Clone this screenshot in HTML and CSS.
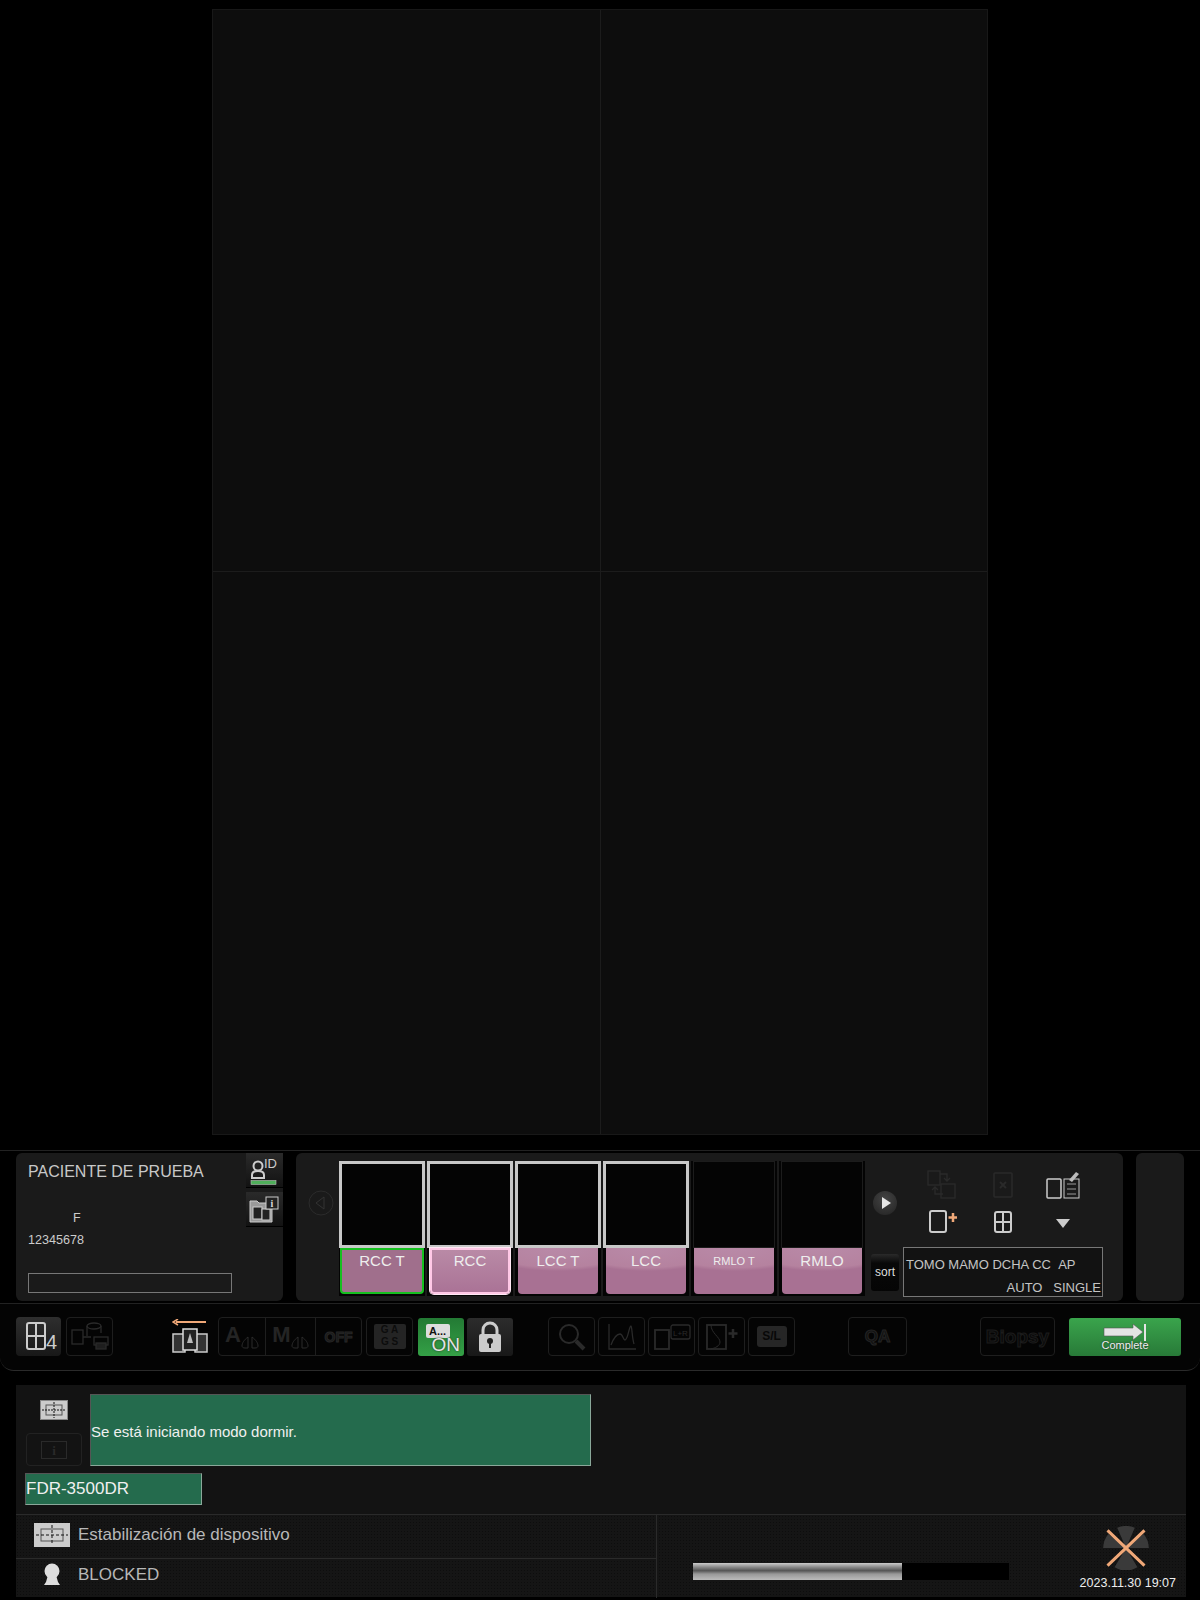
FILE: index.html
```html
<!DOCTYPE html>
<html lang="es">
<head>
    <meta charset="UTF-8">
    <title>Consola</title>
    <link rel="stylesheet" href="styles.css">
</head>
<body>
<div class="viewer">
    <div class="cell"></div>
    <div class="cell"></div>
    <div class="cell"></div>
    <div class="cell"></div>
</div>

<div class="work">
    <div class="patient">
        <div class="patient-info">
            <div class="patient-name">PACIENTE DE PRUEBA</div>
            <div class="patient-sex">F</div>
            <div class="patient-id">12345678</div>
            <div class="patient-note"></div>
        </div>
        <div class="patient-side">
            <div class="side-btn">
                <svg width="37" height="34" viewBox="0 0 37 34">
                    <circle cx="12" cy="13" r="4.500" fill="none" stroke="#ccc" stroke-width="2"/>
                    <path d="M6 25v-3c0-3 3-4 6-4s6 1 6 4v3z" fill="none" stroke="#ccc" stroke-width="2"/>
                    <text x="18" y="15" class="id-text">ID</text>
                    <rect x="5" y="27.500" width="25" height="4" fill="#4fae5a" stroke="#bbb" stroke-width="0.600"/>
                </svg>
            </div>
            <div class="side-btn">
                <svg width="37" height="35" viewBox="0 0 37 35">
                    <path d="M4 9h7l2 2h13v19H4z" fill="#9a9a9a" stroke="#ccc"/>
                    <rect x="7" y="15" width="9" height="12" fill="#222" stroke="#ccc"/>
                    <rect x="16" y="17" width="8" height="11" fill="#222" stroke="#ccc"/>
                    <rect x="20" y="5" width="12" height="12" fill="#222" stroke="#ccc"/>
                    <text x="26" y="15" class="i-text">i</text>
                </svg>
            </div>
        </div>
    </div>

    <div class="thumbs">
        <div class="nav-col">
            <svg class="nav-left" width="26" height="26" viewBox="0 0 26 26">
                <circle cx="13" cy="13" r="12" fill="none" stroke="#2b2b2b"/>
                <path d="M16 7v12l-8-6z" fill="none" stroke="#333"/>
            </svg>
        </div>
        <div class="strip">
            <div class="slot">
                <div class="thumb on"></div>
                <div class="label active">RCC T</div>
            </div>
            <div class="slot">
                <div class="thumb on"></div>
                <div class="label selected">RCC</div>
            </div>
            <div class="slot">
                <div class="thumb on"></div>
                <div class="label">LCC T</div>
            </div>
            <div class="slot">
                <div class="thumb on"></div>
                <div class="label">LCC</div>
            </div>
            <div class="slot">
                <div class="thumb"></div>
                <div class="label small">RMLO T</div>
            </div>
            <div class="slot">
                <div class="thumb"></div>
                <div class="label">RMLO</div>
            </div>
        </div>
        <div class="thumb-tools">
            <div class="next-btn"></div>
            <div class="sort-btn">sort</div>
        </div>
        <div class="tools-right">
            <div class="icon-grid">
                <svg width="32" height="30" viewBox="0 0 32 30" fill="none" stroke="#2a2a2a" stroke-width="1.300">
                    <rect x="1" y="1" width="12" height="14"/>
                    <rect x="14" y="14" width="14" height="14"/>
                    <path d="M13 4h7v6M17 8l3 3 3-3M16 24H8v-6M5 20l3-3 3 3"/>
                </svg>
                <svg width="20" height="26" viewBox="0 0 20 26" fill="none" stroke="#2a2a2a" stroke-width="1.500">
                    <rect x="1" y="1" width="18" height="24" rx="1"/>
                    <path d="M7 10l6 6M13 10l-6 6" stroke-width="2"/>
                </svg>
                <svg width="34" height="28" viewBox="0 0 34 28" fill="none" stroke="#ccc">
                    <rect x="1" y="8" width="14" height="19" rx="1" stroke-width="1.500"/>
                    <rect x="18" y="8" width="15" height="19" stroke-width="1"/>
                    <path d="M21 13h9M21 18h9M21 23h9" stroke="#999"/>
                    <path d="M23 9l7-8 3 2-7 8z" fill="#bbb" stroke="none"/>
                </svg>
                <svg width="28" height="24" viewBox="0 0 28 24" fill="none">
                    <rect x="1" y="1" width="16" height="21" rx="2" stroke="#ccc" stroke-width="2"/>
                    <path d="M24 3v9M19.500 7.500h9" stroke="#f0a878" stroke-width="2.500"/>
                </svg>
                <svg width="18" height="22" viewBox="0 0 18 22" fill="none" stroke="#ccc" stroke-width="2">
                    <rect x="1" y="1" width="16" height="20" rx="2"/>
                    <path d="M9 1v20M1 11h16"/>
                </svg>
                <svg class="drop" width="14" height="9" viewBox="0 0 14 9"><path d="M0 0h14l-7 9z" fill="#ccc"/></svg>
            </div>
            <div class="protocol">
                <div>TOMO MAMO DCHA CC&nbsp;&nbsp;AP</div>
                <div class="protocol-right">AUTO&nbsp;&nbsp;&nbsp;SINGLE</div>
            </div>
        </div>
    </div>

    <div class="spare"></div>
</div>

<div class="toolbar">
    <div class="tool lit">
        <svg width="42" height="34" viewBox="0 0 42 34" fill="none">
            <rect x="9" y="3" width="18" height="26" rx="2" stroke="#ccc" stroke-width="2"/>
            <path d="M18 3v26M9 16h18" stroke="#ccc" stroke-width="2"/>
            <text x="28" y="29" class="four">4</text>
        </svg>
    </div>
    <div class="tool dim wide-gap">
        <svg width="40" height="32" viewBox="0 0 40 32" fill="none" stroke="#2a2a2a" stroke-width="1.300">
            <rect x="2" y="9" width="11" height="14"/>
            <ellipse cx="24" cy="5" rx="7" ry="3"/>
            <path d="M17 5v10M31 5v7M13 16h8"/>
            <rect x="24" y="16" width="14" height="8"/>
            <rect x="26" y="22" width="10" height="6" fill="#1e1e1e"/>
        </svg>
    </div>
    <div class="tray">
        <svg width="36" height="36" viewBox="0 0 36 36" fill="none">
            <path d="M34 3H4" stroke="#f0a878" stroke-width="2"/>
            <path d="M6 0L1 3l5 3" stroke="#f0a878" stroke-width="1.500"/>
            <rect x="1" y="15" width="12" height="18" stroke="#ccc" stroke-width="1.500" fill="#333"/>
            <rect x="23" y="15" width="12" height="18" stroke="#ccc" stroke-width="1.500" fill="#333"/>
            <rect x="11" y="10" width="14" height="21" stroke="#ddd" stroke-width="1.500" fill="#222"/>
            <path d="M18 14l-3 10h6z" fill="#bbb"/>
        </svg>
    </div>
    <div class="tool-group">
        <div class="seg seg-a"><b>A</b><svg width="18" height="13" viewBox="0 0 18 13" fill="none" stroke="#2a2a2a"><path d="M7 1C3 4 1 7 1 10c0 1 1 2 3 2h3zM11 1c4 3 6 6 6 9 0 1-1 2-3 2h-3z"/></svg></div>
        <div class="seg seg-m"><b>M</b><svg width="18" height="13" viewBox="0 0 18 13" fill="none" stroke="#2a2a2a"><path d="M7 1C3 4 1 7 1 10c0 1 1 2 3 2h3zM11 1c4 3 6 6 6 9 0 1-1 2-3 2h-3z"/></svg></div>
        <div class="seg seg-off">OFF</div>
    </div>
    <div class="tool dim gags"><div class="gags-box">G A<br>G S</div></div>
    <div class="auto-on">
        <span class="auto-tag">A...</span>
        <span class="auto-state">ON</span>
    </div>
    <div class="lock">
        <svg width="24" height="32" viewBox="0 0 24 32">
            <path d="M5 14V9a7 7 0 0 1 14 0v5" fill="none" stroke="#ccc" stroke-width="3"/>
            <rect x="1" y="13" width="22" height="18" rx="2" fill="#ccc"/>
            <circle cx="12" cy="20" r="3" fill="#222"/>
            <rect x="11" y="21" width="2" height="6" fill="#222"/>
        </svg>
    </div>
    <div class="tool dim lens">
        <svg width="28" height="28" viewBox="0 0 28 28" fill="none" stroke="#2a2a2a">
            <circle cx="11" cy="11" r="9" stroke-width="2"/>
            <path d="M18 18l8 8" stroke-width="4"/>
        </svg>
    </div>
    <div class="tool dim">
        <svg width="30" height="26" viewBox="0 0 30 26" fill="none" stroke="#2a2a2a" stroke-width="1.300">
            <path d="M2 0v25h27M4 21c3-8 6-11 9-11 3 0 3 6 5 6 3 0 4-14 6-14 1 0 1 12 3 18"/>
        </svg>
    </div>
    <div class="tool dim">
        <svg width="38" height="26" viewBox="0 0 38 26" fill="none" stroke="#2a2a2a" stroke-width="1.300">
            <rect x="2" y="6" width="14" height="19" stroke-width="1.800"/>
            <rect x="18" y="1" width="19" height="14" rx="2"/>
            <text x="20" y="12" class="lr">L+R</text>
        </svg>
    </div>
    <div class="tool dim">
        <svg width="32" height="26" viewBox="0 0 32 26" fill="none" stroke="#2a2a2a">
            <rect x="1" y="1" width="19" height="24" stroke-width="1.800"/>
            <path d="M5 1c0 8 9 12 9 17 0 4-5 6-9 7"/>
            <path d="M27 5v9M22.500 9.500h9" stroke-width="2.500"/>
        </svg>
    </div>
    <div class="tool dim"><div class="sl-box">S/L</div></div>
    <div class="tool dim qa">QA</div>
    <div class="tool dim biopsy">Biopsy</div>
    <div class="complete">
        <svg width="44" height="18" viewBox="0 0 44 18">
            <path d="M1 4h29V0l10 8-10 8v-4H1z" fill="#e4e4e4" stroke="#555" stroke-width="0.600"/>
            <rect x="41" y="0" width="2" height="17" fill="#e4e4e4"/>
        </svg>
        <span class="complete-text">Complete</span>
    </div>
</div>

<div class="status">
    <div class="message-row">
        <div class="message-icons">
            <svg class="stab-small" width="28" height="20" viewBox="0 0 28 20">
                <rect x="0.500" y="0.500" width="27" height="19" fill="#ccc" stroke="#888"/>
                <rect x="6" y="5" width="16" height="10" fill="none" stroke="#555"/>
                <path d="M2 10h24M14 2v16" stroke="#111" stroke-dasharray="2 1"/>
            </svg>
            <div class="info-btn">
                <svg width="26" height="18" viewBox="0 0 26 18">
                    <rect x="0.500" y="0.500" width="25" height="17" fill="none" stroke="#2a2a2a"/>
                    <text x="13" y="14" class="info-i">i</text>
                </svg>
            </div>
        </div>
        <div class="message">Se está iniciando modo dormir.</div>
    </div>
    <div class="model">FDR-3500DR</div>

    <div class="status-grid">
        <div class="status-row first">
            <svg class="row-icon" width="36" height="24" viewBox="0 0 36 24">
                <rect width="36" height="24" fill="#ccc"/>
                <rect x="7" y="6" width="22" height="12" fill="none" stroke="#555"/>
                <path d="M2 12h32M18 2v20" stroke="#111" stroke-dasharray="3 2"/>
            </svg>
            <span>Estabilización de dispositivo</span>
        </div>
        <div class="status-row second">
            <svg class="row-icon" width="36" height="24" viewBox="0 0 36 24">
                <circle cx="18" cy="8" r="7.500" fill="#ddd"/>
                <path d="M14 12h8l2 7 2 3H10l2-3z" fill="#ddd"/>
            </svg>
            <span>BLOCKED</span>
        </div>
        <div class="status-side">
            <div class="progress"><div class="progress-fill"></div></div>
            <div class="clock">
                <svg width="48" height="44" viewBox="0 0 52 50">
                    <path d="M26 25L16 2a26 26 0 0 1 20 0zM26 25H0a26 26 0 0 1 6-16zM26 25h26a26 26 0 0 0-6-16zM26 25L13 47a26 26 0 0 0 26 0z" fill="#3a3a3a"/>
                    <path d="M5 5l42 40M47 5L5 45" stroke="#f0a878" stroke-width="3.500"/>
                </svg>
                <div class="clock-text">2023.11.30 19:07</div>
            </div>
        </div>
    </div>
</div>
</body>
</html>
```

FILE: styles.css
```css
*{
    margin: 0;
    padding: 0;
    box-sizing: border-box;
}
html,body{
    width: 1200px;
    height: 1600px;
    overflow: hidden;
}
body{
    background: #000;
    color: #ccc;
    font-family: "Liberation Sans", Arial, sans-serif;
}

/* viewer */
.viewer{
    width: 776px;
    height: 1126px;
    margin: 9px 0 0 212px;
    display: grid;
    grid-template-columns: 388px 1fr;
    grid-template-rows: 1fr 1fr;
    border: 1px solid #181818;
    background: #0d0d0d;
}
.cell{
    border-right: 1px solid #1c1c1c;
    border-bottom: 1px solid #1c1c1c;
}
.cell:nth-child(2n){
    border-right: 0;
}
.cell:nth-child(n+3){
    border-bottom: 0;
}

/* patient + thumbnails */
.work{
    height: 154px;
    margin-top: 15px;
    padding: 2px 16px 2px;
    display: flex;
    gap: 13px;
    border-top: 1px solid #222;
    border-bottom: 1px solid #222;
}
.patient{
    width: 267px;
    display: flex;
    background: #1a1a1a;
    border-radius: 6px;
}
.patient-info{
    width: 230px;
    padding: 9px 0 0 12px;
}
.patient-name{
    font-size: 16px;
    line-height: 20px;
    color: #c8c8c8;
}
.patient-sex{
    margin: 29px 0 0 45px;
    font-size: 12.500px;
    line-height: 15px;
}
.patient-id{
    margin-top: 7px;
    font-size: 12.600px;
    line-height: 15px;
}
.patient-note{
    width: 204px;
    height: 20px;
    margin-top: 25px;
    border: 1px solid #777;
}
.patient-side{
    width: 37px;
    display: flex;
    flex-direction: column;
    gap: 4px;
}
.side-btn{
    height: 35px;
    background: linear-gradient(#2a2a2a, #121212);
    border-bottom: 1px solid #000;
}
.side-btn svg{
    display: block;
}
.id-text{
    font: 13px "Liberation Sans", sans-serif;
    fill: #ccc;
}
.i-text{
    font: bold 10px "Liberation Serif", serif;
    fill: #ddd;
    text-anchor: middle;
}

.thumbs{
    width: 827px;
    display: flex;
    background: #1a1a1a;
    border-radius: 6px;
}
.nav-col{
    width: 43px;
    padding: 37px 0 0 12px;
}
.nav-left{
    display: block;
}
.strip{
    height: 135px;
    margin-top: 8px;
    display: flex;
    gap: 2px;
}
.slot{
    width: 86px;
    background: #040404;
}
.thumb{
    height: 87px;
    margin: 0 2px 0;
    border: 1px solid #1c1c1c;
    background: #040404;
}
.thumb.on{
    margin: 0;
    border: 3px solid #c8c8c8;
}
.label{
    height: 46px;
    margin: 0 3px 0;
    padding-top: 4px;
    border-radius: 0 0 4px 4px;
    text-align: center;
    font-size: 15px;
    line-height: 18px;
    color: #eee;
    background: radial-gradient(ellipse 100% 50% at 50% 0%, #b98aa8, #b5829f 85%, #a87193 100%);
}
.label.small{
    font-size: 11px;
}
.label.active{
    margin: 0 1px 0;
    padding-top: 2px;
    border: 2px solid #16c020;
    background: #a06f8c;
}
.label.selected{
    padding-top: 2px;
    border: 2px solid #ffc8e6;
    box-shadow: 0 0 0 1px #ffe8f4;
    background: linear-gradient(#b98aa6, #aa7396);
}
.thumb-tools{
    width: 39px;
    padding-left: 6px;
    display: flex;
    flex-direction: column;
}
.next-btn{
    width: 24px;
    height: 24px;
    margin: 38px 0 0 2px;
    border-radius: 50%;
    background: radial-gradient(circle at 50% 35%, #444, #222);
    position: relative;
}
.next-btn::after{
    content: "";
    position: absolute;
    left: 9px;
    top: 6px;
    border-left: 9px solid #e6e6e6;
    border-top: 6px solid transparent;
    border-bottom: 6px solid transparent;
}
.sort-btn{
    width: 28px;
    height: 37px;
    margin-top: 39px;
    border-radius: 3px;
    background: linear-gradient(#2a2a2a 0, #080808 25%, #050505);
    text-align: center;
    font-size: 12px;
    line-height: 37px;
    color: #ddd;
}
.tools-right{
    width: 200px;
    margin-left: -1px;
}
.icon-grid{
    height: 94px;
    padding-top: 13px;
    display: grid;
    grid-template-columns: repeat(3, 60px);
    grid-template-rows: repeat(2, 37px);
    justify-content: center;
    align-items: center;
    justify-items: center;
}
.drop{
    margin-top: 4px;
}
.protocol{
    height: 50px;
    padding: 5px 1px 0 2px;
    border: 1px solid #777;
    background: #121212;
    font-size: 13px;
    line-height: 23px;
    color: #c4c4c4;
    white-space: nowrap;
}
.protocol-right{
    text-align: right;
}
.spare{
    width: 48px;
    background: #1a1a1a;
    border-radius: 6px;
}

/* toolbar */
.toolbar{
    height: 67px;
    padding: 13px 0 0 16px;
    display: flex;
    align-items: flex-start;
    border-bottom: 1px solid #2a2a2a;
    border-radius: 0 0 14px 14px;
    background: #040404;
}
.tool{
    width: 47px;
    height: 39px;
    margin-right: 3px;
    display: flex;
    align-items: center;
    justify-content: center;
    border-radius: 4px;
}
.tool.lit{
    width: 45px;
    margin-right: 5px;
    background: linear-gradient(#2e2e2e, #181818);
}
.tool.dim{
    border: 1px solid #1e1e1e;
}
.four{
    font: 20px "Liberation Sans", sans-serif;
    fill: #ccc;
}
.tray{
    width: 36px;
    height: 39px;
    margin: 2px 10px 0 56px;
}
.tool-group{
    width: 144px;
    height: 39px;
    margin-right: 4px;
    display: flex;
    border: 1px solid #1e1e1e;
    border-radius: 4px;
}
.seg{
    display: flex;
    align-items: flex-end;
    justify-content: center;
    padding-bottom: 6px;
    color: #242424;
    border-right: 1px solid #1e1e1e;
}
.seg b{
    font-size: 22px;
    line-height: 22px;
    margin-bottom: 3px;
}
.seg-a{
    width: 47px;
}
.seg-m{
    width: 50px;
}
.seg-off{
    flex: 1;
    border-right: 0;
    align-items: center;
    padding-bottom: 0;
    font-size: 14px;
    font-weight: bold;
    color: #181818;
    -webkit-text-stroke: 1px #262626;
}
.gags{
    margin-right: 5px;
}
.gags-box{
    width: 32px;
    height: 25px;
    border-radius: 2px;
    background: #242424;
    text-align: center;
    font-size: 10px;
    line-height: 12px;
    font-weight: bold;
    color: #0c0c0c;
}
.auto-on{
    width: 46px;
    height: 38px;
    margin: 1px 3px 0 0;
    position: relative;
    border-radius: 3px;
    background: linear-gradient(#237a34, #34a046);
}
.auto-tag{
    position: absolute;
    left: 8px;
    top: 6px;
    width: 24px;
    height: 14px;
    border-radius: 2px;
    background: #ddd;
    color: #111;
    font-size: 11px;
    font-weight: bold;
    line-height: 14px;
    padding-left: 3px;
}
.auto-state{
    position: absolute;
    right: 4px;
    bottom: 1px;
    font-size: 19px;
    line-height: 20px;
    color: #e4e4e4;
    text-shadow: 0 0 2px #222;
}
.lock{
    width: 46px;
    height: 38px;
    margin: 1px 35px 0 0;
    padding-top: 3px;
    display: flex;
    justify-content: center;
    border-radius: 3px;
    background: linear-gradient(#2c2c2c, #181818);
}
.sl-box{
    width: 30px;
    height: 21px;
    border-radius: 3px;
    background: #262626;
    text-align: center;
    font-size: 12px;
    font-weight: bold;
    line-height: 21px;
    color: #080808;
}
.lr{
    font: 8px "Liberation Sans", sans-serif;
    fill: #2a2a2a;
    stroke: none;
}
.qa{
    width: 59px;
    margin: 0 73px 0 50px;
    font-size: 17px;
    font-weight: bold;
    color: #111;
    -webkit-text-stroke: 1px #242424;
}
.biopsy{
    width: 75px;
    margin-right: 14px;
    font-size: 19px;
    font-weight: bold;
    color: #0a0a0a;
    -webkit-text-stroke: 1px #1c1c1c;
}
.complete{
    width: 112px;
    height: 38px;
    margin-top: 1px;
    display: flex;
    flex-direction: column;
    align-items: center;
    padding-top: 6px;
    border-radius: 3px;
    background: linear-gradient(#3aa44c, #287a38);
}
.complete svg{
    display: block;
}
.complete-text{
    margin-top: -3px;
    font-size: 11px;
    line-height: 12px;
    color: #eee;
    text-shadow: 0 0 2px #222;
}

/* status */
.status{
    height: 212px;
    margin: 14px 14px 0 16px;
    background: #131313;
}
.message-row{
    padding: 9px 0 0 10px;
    display: flex;
    gap: 8px;
}
.message-icons{
    width: 56px;
    display: flex;
    flex-direction: column;
    align-items: center;
}
.stab-small{
    margin-top: 6px;
}
.info-btn{
    width: 56px;
    height: 33px;
    margin-top: 13px;
    display: flex;
    align-items: center;
    justify-content: center;
    border: 1px solid #222;
    border-radius: 4px;
}
.info-i{
    font: bold 13px "Liberation Serif", serif;
    fill: #2a2a2a;
    text-anchor: middle;
}
.message{
    width: 501px;
    height: 72px;
    display: flex;
    align-items: center;
    padding: 2px 0 0;
    background: #246b4d;
    border: 1px solid #8aa89a;
    border-top-color: #555;
    border-left-color: #555;
    font-size: 15px;
    color: #f0f0f0;
}
.model{
    width: 177px;
    height: 32px;
    margin: 7px 0 0 9px;
    background: #246b4d;
    border: 1px solid #8aa89a;
    border-top-color: #555;
    border-left-color: #555;
    font-size: 17px;
    line-height: 30px;
    color: #f0f0f0;
}
.status-grid{
    height: 83px;
    margin-top: 9px;
    display: grid;
    grid-template-columns: 641px 1fr;
    grid-template-rows: 44px 39px;
    border-top: 1px solid #2a2a2a;
    background-color: #151515;
    background-image: radial-gradient(#0d0d0d 1px, transparent 1px);
    background-size: 3px 3px;
}
.status-row{
    grid-column: 1;
    display: flex;
    align-items: center;
    gap: 8px;
    padding-left: 18px;
    border-right: 1px solid #2a2a2a;
    font-size: 17px;
    color: #b8b8b8;
}
.status-row.first{
    padding-bottom: 3px;
    border-bottom: 1px solid #2a2a2a;
}
.status-row.second{
    padding-bottom: 8px;
}
.row-icon{
    display: block;
}
.status-side{
    grid-column: 2;
    grid-row: 1 / 3;
    display: flex;
    align-items: flex-start;
}
.progress{
    width: 316px;
    height: 17px;
    margin: 48px 0 0 36px;
    background: #000;
}
.progress-fill{
    width: 209px;
    height: 17px;
    background: linear-gradient(#ccc, #888 25%, #555 45%, #999 65%, #bbb);
}
.clock{
    margin: 11px 10px 0 auto;
    display: flex;
    flex-direction: column;
    align-items: center;
}
.clock svg{
    display: block;
    margin-right: 3px;
}
.clock-text{
    margin-top: 6px;
    font-size: 12.500px;
    line-height: 14px;
    color: #eee;
    white-space: nowrap;
}
```
